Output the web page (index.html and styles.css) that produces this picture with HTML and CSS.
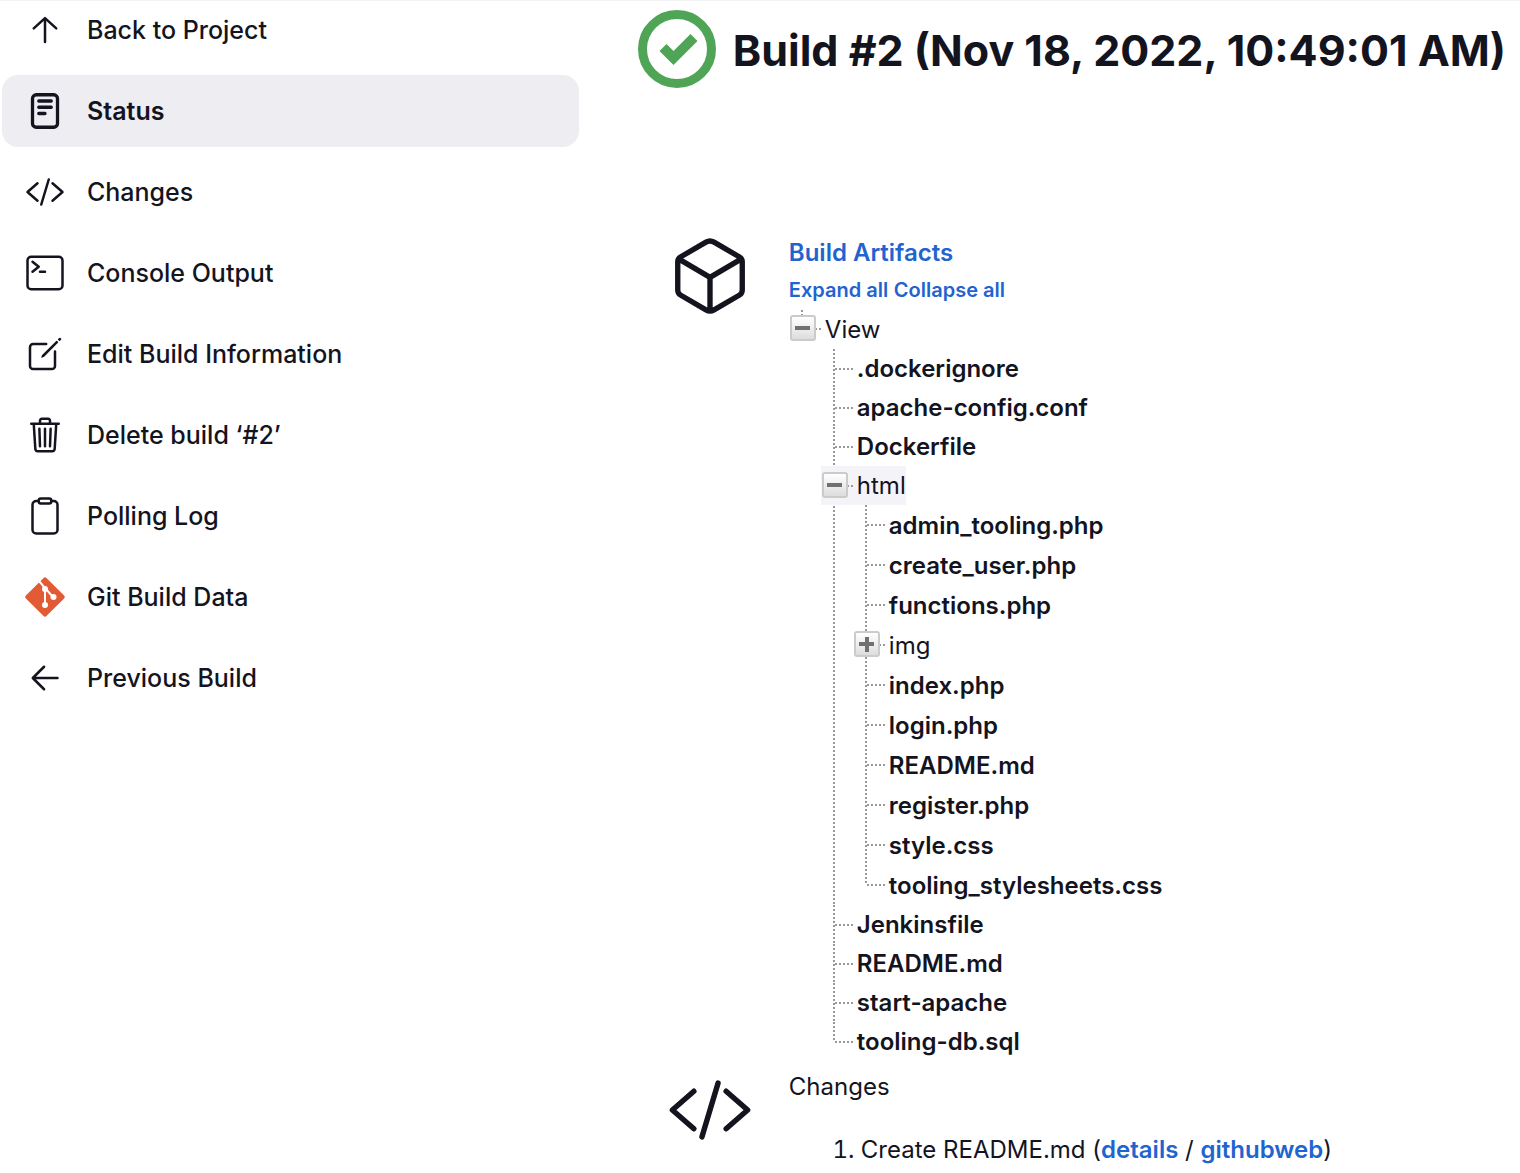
FILE: index.html
```html
<!DOCTYPE html>
<html lang="en">
<head>
<meta charset="utf-8">
<title>Build #2</title>
<link rel="stylesheet" href="styles.css">
</head>
<body>
<svg class="defs" aria-hidden="true">
  <symbol id="changes" viewBox="0 0 512 512"><path d="M160 368L32 256l128-112M352 368l128-112-128-112M304 96l-96 320" fill="none" stroke="currentColor" stroke-linecap="round" stroke-linejoin="round" stroke-width="32"/></symbol>
</svg>
<div class="page">
  <nav class="tasks" aria-label="Build">
    <a class="task" href="#"><svg class="task-icon" viewBox="0 0 512 512"><path d="M112 236l144-132 144 132M256 104v304" class="line"/></svg>Back to Project</a>
    <a class="task task-active" href="#" aria-current="page"><svg class="task-icon" viewBox="0 0 512 512"><rect x="96" y="48" width="320" height="416" rx="48" class="line"/><path d="M176 128h160M176 208h160M176 288h80" class="line"/></svg>Status</a>
    <a class="task" href="#"><svg class="task-icon"><use href="#changes"/></svg>Changes</a>
    <a class="task" href="#"><svg class="task-icon" viewBox="0 0 512 512"><rect x="32" y="48" width="448" height="416" rx="48" class="line"/><path d="M96 112l80 64-80 64M192 240h64" class="line"/></svg>Console Output</a>
    <a class="task" href="#"><svg class="task-icon" viewBox="0 0 512 512"><path d="M384 224v184a40 40 0 01-40 40H104a40 40 0 01-40-40V168a40 40 0 0140-40h167" class="line"/><path d="M459.940 53.250a16.060 16.060 0 00-23.220-.560L424.350 65a8 8 0 000 11.310l11.340 11.320a8 8 0 0011.340 0l12.060-12c6.100-6.090 6.670-16.010.850-22.380zM399.340 90L218.820 270.200a9 9 0 00-2.310 3.930L208.160 299a3.910 3.910 0 004.860 4.860l24.850-8.350a9 9 0 003.930-2.310L422 112.660a9 9 0 000-12.660l-9.950-10a9 9 0 00-12.710 0z" fill="currentColor"/></svg>Edit Build Information</a>
    <a class="task" href="#"><svg class="task-icon" viewBox="0 0 512 512"><path d="M112 112l20 320c.950 18.490 14.400 32 32 32h184c17.670 0 30.870-13.510 32-32l20-320M80 112h352M192 112V72a23.930 23.930 0 0124-24h80a23.930 23.930 0 0124 24v40M256 176v224M184 176l8 224M328 176l-8 224" class="line"/></svg>Delete build ‘#2’</a>
    <a class="task" href="#"><svg class="task-icon" viewBox="0 0 512 512"><path d="M336 64h32a48 48 0 0148 48v320a48 48 0 01-48 48H144a48 48 0 01-48-48V112a48 48 0 0148-48h32" class="line"/><rect x="176" y="32" width="160" height="64" rx="26" class="line"/></svg>Polling Log</a>
    <a class="task" href="#"><svg class="task-icon" viewBox="0 0 40 40"><rect x="5.500" y="5.500" width="29" height="29" rx="2" transform="rotate(45 20 20)" fill="#e35b35"/><path d="M14 4l6 7v17M20 11l8 9" fill="none" stroke="#fff" stroke-width="2"/><circle cx="20" cy="12" r="3" fill="#fff"/><circle cx="20" cy="28" r="3" fill="#fff"/><circle cx="28.500" cy="20" r="3" fill="#fff"/></svg>Git Build Data</a>
    <a class="task" href="#"><svg class="task-icon" viewBox="0 0 512 512"><path d="M244 400L100 256l144-144M112 256h304" class="line"/></svg>Previous Build</a>
  </nav>
  <main class="main">
    <header class="headline">
      <svg class="result-icon" viewBox="0 0 78 78"><circle cx="39" cy="39" r="34.500" fill="none" stroke="#50a455" stroke-width="9"/><path d="M21.500 41l7-7 7 7 17-17 7 7-24 24z" fill="#50a455"/></svg>
      <h1 class="title">Build #2 (Nov 18, 2022, 10:49:01 AM)</h1>
    </header>
    <section class="summary">
      <svg class="summary-icon" viewBox="0 0 512 512"><path d="M448 341.370V170.610A32 32 0 00432.110 143l-152-88.460a47.940 47.940 0 00-48.240 0L79.890 143A32 32 0 0064 170.610v170.760A32 32 0 0079.890 369l152 88.460a48 48 0 0048.240 0l152-88.460A32 32 0 00448 341.370zM69 153.990l187 110 187-110M256 463.990v-200" class="line"/></svg>
      <div class="summary-body">
        <a class="artifacts" href="#">Build Artifacts</a>
        <div class="controls"><a href="#">Expand all</a> <a href="#">Collapse all</a></div>
        <ul class="tree">
          <li class="node">
            <span class="folder root"><button class="toggle" aria-label="Collapse View"></button>View</span>
            <ul class="tree level">
              <li class="node"><a class="file" href="#">.dockerignore</a></li>
              <li class="node"><a class="file" href="#">apache-config.conf</a></li>
              <li class="node"><a class="file" href="#">Dockerfile</a></li>
              <li class="node"><span class="folder selected"><button class="toggle" aria-label="Collapse html"></button>html</span>
                <ul class="tree level nested">
                  <li class="node"><a class="file" href="#">admin_tooling.php</a></li>
                  <li class="node"><a class="file" href="#">create_user.php</a></li>
                  <li class="node"><a class="file" href="#">functions.php</a></li>
                  <li class="node"><span class="folder"><button class="toggle closed" aria-label="Expand img"></button>img</span></li>
                  <li class="node"><a class="file" href="#">index.php</a></li>
                  <li class="node"><a class="file" href="#">login.php</a></li>
                  <li class="node"><a class="file" href="#">README.md</a></li>
                  <li class="node"><a class="file" href="#">register.php</a></li>
                  <li class="node"><a class="file" href="#">style.css</a></li>
                  <li class="node"><a class="file" href="#">tooling_stylesheets.css</a></li>
                </ul>
              </li>
              <li class="node"><a class="file" href="#">Jenkinsfile</a></li>
              <li class="node"><a class="file" href="#">README.md</a></li>
              <li class="node"><a class="file" href="#">start-apache</a></li>
              <li class="node"><a class="file" href="#">tooling-db.sql</a></li>
            </ul>
          </li>
        </ul>
      </div>
    </section>
    <section class="summary changes">
      <svg class="summary-icon"><use href="#changes"/></svg>
      <div class="summary-body">
        <div>Changes</div>
        <ol class="commits"><li>Create README.md (<a href="#">details</a> / <a href="#">githubweb</a>)</li></ol>
      </div>
    </section>
  </main>
</div>
</body>
</html>
```

FILE: styles.css
```css
* { box-sizing: border-box; }
body {
  margin: 0;
  border-top: 1px solid #f3f3f4;
  background: #fff;
  color: #14141f;
  font: 24px/39px Inter, "Liberation Sans", sans-serif;
}
a { color: #1f64cf; font-weight: 600; text-decoration: none; }
.defs { position: absolute; width: 0; height: 0; }
.page { display: flex; gap: 59px; padding-left: 2px; }

.tasks { flex: 0 0 38%; display: flex; flex-direction: column; gap: 9px; margin-top: -7px; }
.task {
  display: flex;
  align-items: center;
  gap: 22px;
  height: 72px;
  padding-left: 23px;
  border-radius: 16px;
  color: #14141f;
  font-size: 25px;
  font-weight: 500;
}
.task-active { background: #eeedf2; font-weight: 600; }
.task-icon { width: 40px; height: 40px; }
.line { fill: none; stroke: currentColor; stroke-width: 32; stroke-linecap: round; stroke-linejoin: round; }
.task-active .line { stroke-width: 42; }

.main { flex: 1; min-width: 0; }
.headline { display: flex; align-items: center; gap: 17px; padding-top: 9px; }
.result-icon { width: 78px; height: 78px; flex: none; }
.title { margin: 0; padding-top: 2px; font-size: 43px; font-weight: 700; line-height: 56px; white-space: nowrap; }

.summary { display: flex; gap: 36px; padding: 145px 0 0 29px; }
.summary-icon { width: 86px; height: 86px; flex: none; }
.controls { font-size: 20px; line-height: 37px; }

.tree { margin: 0; padding: 0; list-style: none; }
.node { position: relative; }
.folder, .file { display: inline-flex; align-items: center; height: 39px; vertical-align: top; }
.file { color: #14141f; padding-left: 36px; }
.folder { position: relative; padding-left: 36px; }
.root { height: 40px; }
.nested > .node > .file, .nested > .node > .folder { height: 40px; }
.level { margin-left: 32px; }
.selected { background: #f4f3f8; }
.level > .node::before {
  content: "";
  position: absolute;
  top: 0;
  bottom: 0;
  left: 12px;
  width: 2px;
  background: repeating-linear-gradient(#999 0 2px, transparent 2px 4px);
}
.level > .node:last-child::before { bottom: 50%; }
.level > .node::after,
.root::after {
  content: "";
  position: absolute;
  top: 19px;
  left: 14px;
  width: 18px;
  height: 2px;
  background: repeating-linear-gradient(90deg, #999 0 2px, transparent 2px 4px);
}
.root::before {
  content: "";
  position: absolute;
  top: 1px;
  left: 12px;
  width: 2px;
  height: 6px;
  background: repeating-linear-gradient(#999 0 2px, transparent 2px 4px);
}
.toggle {
  position: absolute;
  z-index: 1;
  left: 1px;
  top: 6px;
  width: 26px;
  height: 26px;
  padding: 0;
  border: 2px solid #cbcbcb;
  border-radius: 3px;
  background: linear-gradient(#707070, #707070) center / 15px 4px no-repeat, linear-gradient(#fff, #ddd);
}
.closed { background: linear-gradient(#707070, #707070) center / 15px 4px no-repeat, linear-gradient(#707070, #707070) center / 4px 15px no-repeat, linear-gradient(#fff, #ddd); }

.changes { padding-top: 6px; }
.commits { margin: 24px 0 0; padding-left: 72px; }
```
